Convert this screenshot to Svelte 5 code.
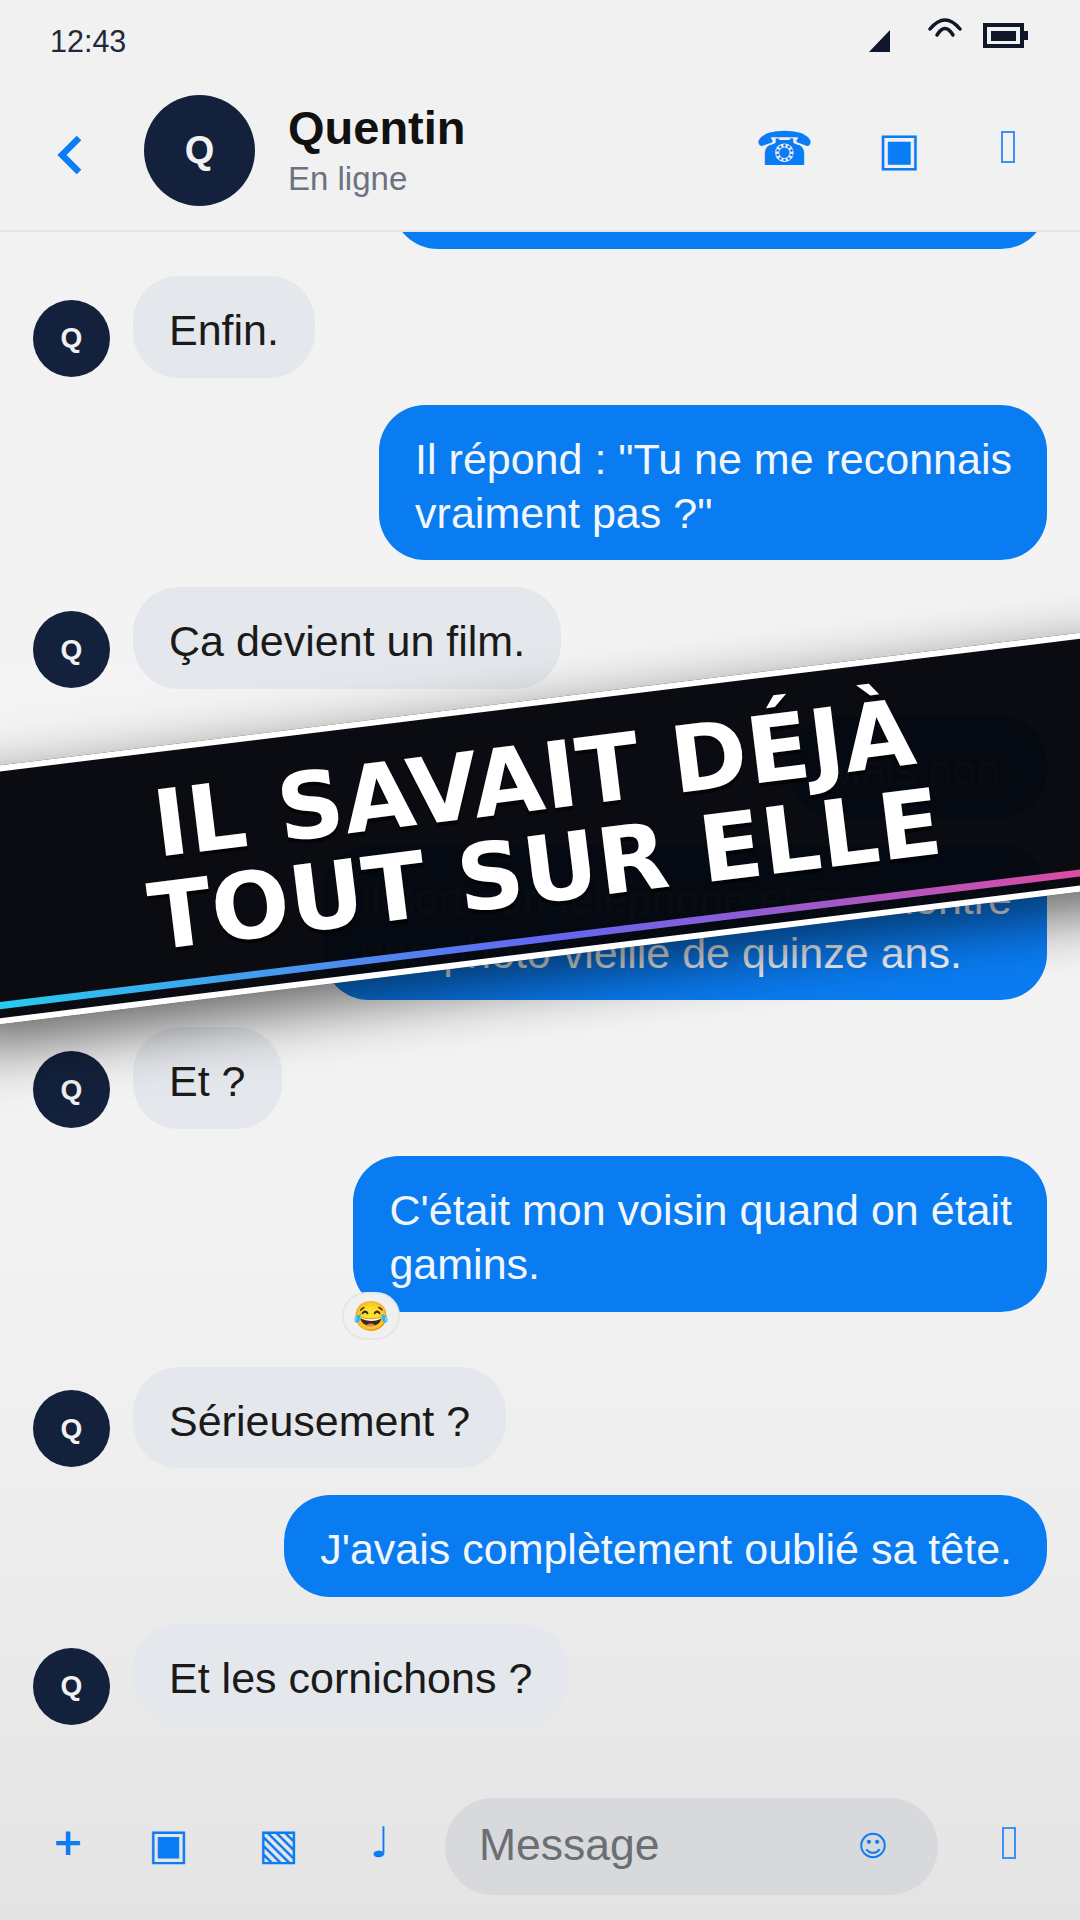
<script>
  const messages = [
    { me: true, text: ' ', clipped: true },
    { text: 'Enfin.' },
    { me: true, text: 'Il répond : "Tu ne me reconnais\nvraiment pas ?"' },
    { text: 'Ça devient un film.' },
    { me: true, text: 'Mais non.' },
    { me: true, text: 'Il sort son téléphone et me montre\nune photo vieille de quinze ans.' },
    { text: 'Et ?' },
    { me: true, text: "C'était mon voisin quand on était\ngamins.", reaction: '😂' },
    { text: 'Sérieusement ?' },
    { me: true, text: "J'avais complètement oublié sa tête." },
    { text: 'Et les cornichons ?' },
  ];
</script>

<div class="screen">
  <div class="status">
    <span class="time">12:43</span>
    <div class="status-icons">
      <svg class="signal" width="22" height="24" viewBox="0 0 22 24"><path d="M0 23 L21 1 V23 Z" fill="#0f172a" /></svg>
      <svg class="wifi" width="34" height="22" viewBox="0 0 34 22" fill="none" stroke="#0f172a" stroke-width="3.500" stroke-linecap="round"><path d="M2 11 Q17 -7 32 11" /><path d="M9 17 Q17 4 25 17" /></svg>
      <div class="battery"><div class="level"></div></div>
    </div>
  </div>

  <header>
    <span class="back">
      <svg width="26" height="38" viewBox="0 0 26 38" fill="none" stroke="#0a7cf5" stroke-width="6.500"><path d="M23 2 L6 19 L23 36" /></svg>
    </span>
    <div class="avatar big">Q</div>
    <div class="who">
      <div class="name">Quentin</div>
      <div class="state">En ligne</div>
    </div>
    <div class="actions">
      <span class="glyph phone">☎</span>
      <span class="glyph video">▣</span>
      <span class="tofu"></span>
    </div>
  </header>

  <main>
    {#each messages as m}
      <div class="row" class:me={m.me} class:has-reaction={m.reaction} class:clipped={m.clipped}>
        {#if !m.me}<div class="avatar">Q</div>{/if}
        <div class="bubble">
          <span class="copy">{m.text}</span>
          {#if m.reaction}<span class="reaction">{m.reaction}</span>{/if}
        </div>
      </div>
    {/each}
  </main>

  <footer>
    <span class="glyph plus">+</span>
    <span class="glyph square">▣</span>
    <span class="glyph hatch">▧</span>
    <span class="glyph note">♩</span>
    <div class="input">
      <span class="placeholder">Message</span>
      <span class="glyph smile">☺</span>
    </div>
    <span class="tofu"></span>
  </footer>

  <div class="banner">
    <div class="banner-text">IL SAVAIT DÉJÀ<br />TOUT SUR ELLE</div>
    <div class="rainbow"></div>
  </div>
</div>

<style>
  :global(body) {
    margin: 0;
  }

  .screen {
    position: relative;
    width: 1080px;
    height: 1920px;
    overflow: hidden;
    display: flex;
    flex-direction: column;
    font-family: "Liberation Sans", Arial, sans-serif;
    color: #111;
    background: linear-gradient(180deg, #f1f1f1 0%, #f4f4f4 45%, #f1f1f1 70%, #e4e4e4 100%);
  }

  .status {
    height: 80px;
    flex: none;
    display: flex;
    justify-content: space-between;
    align-items: center;
    padding: 2px 52px 0 50px;
    box-sizing: border-box;
  }
  .time {
    font-size: 30.500px;
    color: #1f2937;
  }
  .status-icons {
    align-self: flex-start;
    display: flex;
    align-items: flex-start;
    padding-top: 16px;
  }
  .signal { margin: 11px 37px 0 0; }
  .wifi { margin-right: 21px; }
  .battery {
    position: relative;
    margin-top: 5px;
    margin-right: 4px;
    width: 41px;
    height: 25px;
    box-sizing: border-box;
    border: 4px solid #0f172a;
    display: flex;
    align-items: center;
    justify-content: center;
  }
  .battery::after {
    content: "";
    position: absolute;
    right: -8px;
    top: 4px;
    width: 4px;
    height: 9px;
    background: #0f172a;
  }
  .level {
    width: 25px;
    height: 10px;
    background: #0f172a;
  }

  header {
    height: 152px;
    flex: none;
    display: flex;
    align-items: center;
    box-sizing: border-box;
    padding: 0 0 10px 56px;
    border-bottom: 2px solid #e4e4e4;
    background: #f1f1f1;
    position: relative;
    z-index: 1;
  }
  .back {
    display: flex;
    width: 88px;
    margin-top: 9px;
  }
  .avatar {
    flex: none;
    width: 77px;
    height: 77px;
    margin-bottom: 1px;
    border-radius: 50%;
    background: #13213c;
    color: #f1f1f1;
    font-weight: 700;
    font-size: 28px;
    display: flex;
    align-items: center;
    justify-content: center;
  }
  .avatar.big {
    width: 111px;
    height: 111px;
    margin-bottom: 0;
    font-size: 38px;
  }
  .who {
    margin-left: 33px;
    flex: 1;
  }
  .name {
    font-size: 47px;
    font-weight: 700;
    line-height: 54px;
    color: #111;
  }
  .state {
    font-size: 33px;
    line-height: 40px;
    margin-top: 4px;
    color: #6b7280;
  }
  .actions {
    display: flex;
    align-items: center;
    padding-right: 65px;
  }
  .glyph {
    font-family: "DejaVu Sans", sans-serif;
    color: #0a7cf5;
    line-height: 1;
  }
  .phone { font-size: 47px; margin: -4px 64px 0 0; }
  .video { font-size: 46px; margin: -2px 80px 0 0; }
  .tofu {
    display: block;
    box-sizing: border-box;
    width: 14px;
    height: 32px;
    margin-top: -6px;
    border: 2px solid #3b92f5;
  }

  main {
    flex: 1;
    min-height: 0;
    overflow: hidden;
    display: flex;
    flex-direction: column;
    justify-content: flex-start;
    gap: 27px;
    padding: 0 33px;
    font-size: 43px;
  }
  .row {
    display: flex;
    align-items: flex-end;
    gap: 23px;
    flex: none;
  }
  .row.me { justify-content: flex-end; }
  .row.clipped { margin-top: -85px; }
  .row.clipped .bubble { width: 655px; height: 102px; }
  .row.has-reaction { margin-bottom: 28px; }
  .bubble {
    position: relative;
    box-sizing: border-box;
    padding: 28px 36px 20px;
    line-height: 1.250;
    border-radius: 46px;
    background: #e4e7eb;
    color: #1a1a1a;
  }
  .copy { white-space: pre-line; }
  .me .bubble {
    padding-right: 35px;
    background: #0a7cf2;
    color: #f3f6fa;
  }
  .reaction {
    position: absolute;
    left: -11px;
    bottom: -28px;
    width: 58px;
    height: 48px;
    box-sizing: border-box;
    border: 2px solid #e6e6e6;
    border-radius: 24px;
    background: #f0f0f0;
    font-size: 29px;
    line-height: 44px;
    text-align: center;
  }

  footer {
    height: 125px;
    flex: none;
    display: flex;
    align-items: center;
    position: relative;
    padding: 0 0 22px 52px;
    box-sizing: border-box;
  }
  .plus { font-size: 38px; font-weight: 700; width: 96px; margin-top: -10px; }
  .square { font-size: 43px; width: 110px; margin-top: -4px; }
  .hatch { font-size: 43px; width: 112px; margin-top: -4px; }
  .note { font-size: 42px; width: 75px; margin-top: -8px; }
  footer .tofu { margin-top: -8px; }
  .input {
    width: 493px;
    height: 97px;
    border-radius: 49px;
    background: #d7d9dc;
    display: flex;
    align-items: center;
    justify-content: space-between;
    padding: 0 50px 0 34px;
    box-sizing: border-box;
    font-size: 44.500px;
    color: #6b6e72;
    margin-right: 64px;
  }
  .placeholder { margin-top: -4px; }
  .smile { font-size: 29px; }

  .banner {
    position: absolute;
    left: -60px;
    top: 700px;
    width: 1200px;
    height: 257px;
    box-sizing: border-box;
    padding-bottom: 7px;
    transform: rotate(-7deg);
    background: rgba(5, 7, 12, 0.98);
    border-top: 6px solid #fff;
    border-bottom: 6px solid #fff;
    box-shadow: 0 20px 60px rgba(0, 0, 0, 0.6);
    display: flex;
    align-items: center;
    justify-content: center;
  }
  .banner-text {
    font-family: "DejaVu Sans", sans-serif;
    font-weight: 700;
    font-size: 92px;
    line-height: 92px;
    text-align: center;
    color: #fff;
    text-shadow: 0 4px 0 rgba(0, 0, 0, 0.6);
  }
  .rainbow {
    position: absolute;
    left: 0;
    right: 0;
    bottom: 9px;
    height: 7px;
    background: linear-gradient(90deg, #22d3ee, #6366f1 50%, #ec4899);
  }
</style>
